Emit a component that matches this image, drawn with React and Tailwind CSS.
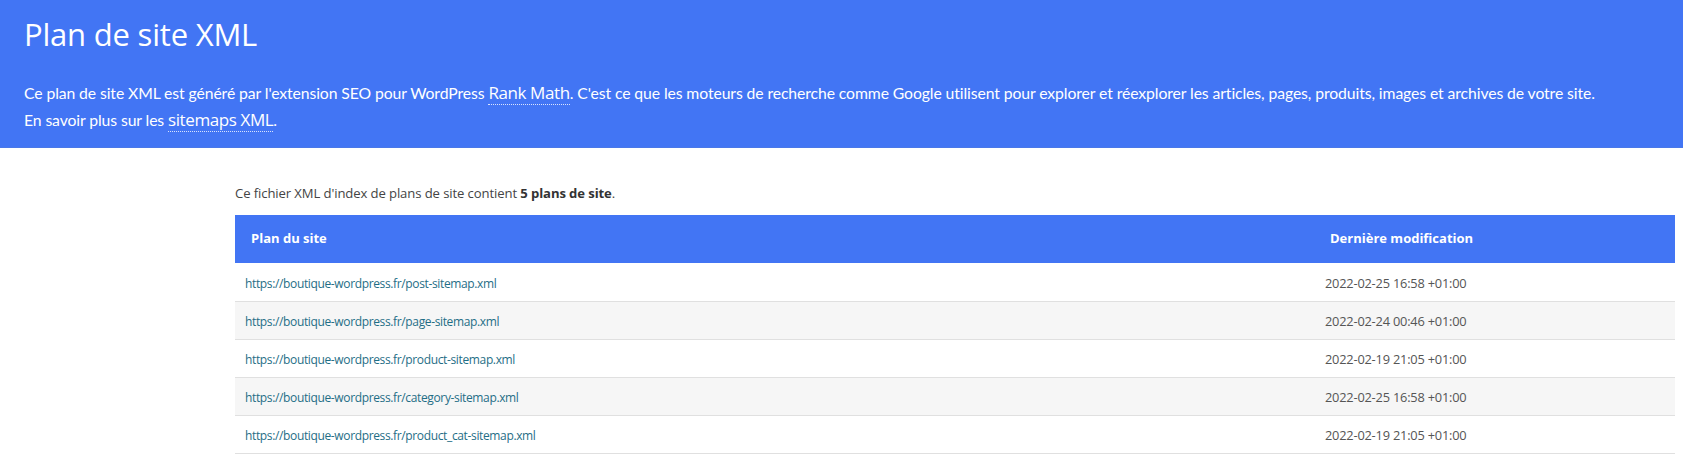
const SITEMAPS = [
  { loc: 'https://boutique-wordpress.fr/post-sitemap.xml', mod: '2022-02-25 16:58 +01:00' },
  { loc: 'https://boutique-wordpress.fr/page-sitemap.xml', mod: '2022-02-24 00:46 +01:00' },
  { loc: 'https://boutique-wordpress.fr/product-sitemap.xml', mod: '2022-02-19 21:05 +01:00' },
  { loc: 'https://boutique-wordpress.fr/category-sitemap.xml', mod: '2022-02-25 16:58 +01:00' },
  { loc: 'https://boutique-wordpress.fr/product_cat-sitemap.xml', mod: '2022-02-19 21:05 +01:00' },
]

export default function App() {
  return (
    <div className="min-h-[471px] bg-white font-['Open_Sans',sans-serif]">
      {/* Header band */}
      <header className="h-[148px] bg-[#4275f4] text-white px-[24px] pt-[14px] border-b border-[#4a78e8]">
        <h1 className="text-[31px] leading-[40px] font-['Open_Sans',sans-serif] tracking-[-0.2px]">Plan de site XML</h1>
        <div className="mt-[25px] text-[15.75px] leading-[27px] font-['Lato',sans-serif] tracking-[-0.1px]">
          <p>
            Ce plan de site XML est généré par l'extension SEO pour WordPress{' '}
            <a className="text-[17px] leading-[20px] font-['Open_Sans',sans-serif] tracking-[-0.4px] border-b border-dotted border-white/80">Rank Math</a>. C'est ce que les moteurs de recherche comme Google utilisent pour explorer et réexplorer les articles, pages, produits, images et archives de votre site.
          </p>
          <p>
            En savoir plus sur les{' '}
            <a className="text-[17px] leading-[20px] font-['Open_Sans',sans-serif] tracking-[-0.4px] border-b border-dotted border-white/80">sitemaps XML</a>.
          </p>
        </div>
      </header>

      {/* Sitemap index */}
      <main className="ml-[235px] w-[1440px] pt-[36px]">
        <p className="text-[13.1px] text-[#444] leading-[18px] tracking-[-0.1px] mb-[13px]">
          Ce fichier XML d'index de plans de site contient <strong className="font-bold text-[#333]">5 plans de site</strong>.
        </p>
        <table className="w-full border-collapse">
          <thead>
            <tr className="bg-[#4275f4] text-white h-[48px] text-[13px]">
              <th className="w-[75%] text-left pl-[16px] font-bold">Plan du site</th>
              <th className="text-left pl-[15px] font-bold">Dernière modification</th>
            </tr>
          </thead>
          <tbody>
            {SITEMAPS.map((s, i) => (
              <tr key={s.loc} className={`h-[38px] border-b border-[#e0e0e0] ${i % 2 === 1 ? 'bg-[#f6f6f6]' : 'bg-white'}`}>
                <td className="pl-[10px] pt-[4px] text-[12px] tracking-[-0.36px]">
                  <a className="text-[#1f6e86]">{s.loc}</a>
                </td>
                <td className="pl-[10px] pt-[4px] text-[12.8px] text-[#555] tracking-[-0.2px]">{s.mod}</td>
              </tr>
            ))}
          </tbody>
        </table>
      </main>
    </div>
  )
}
